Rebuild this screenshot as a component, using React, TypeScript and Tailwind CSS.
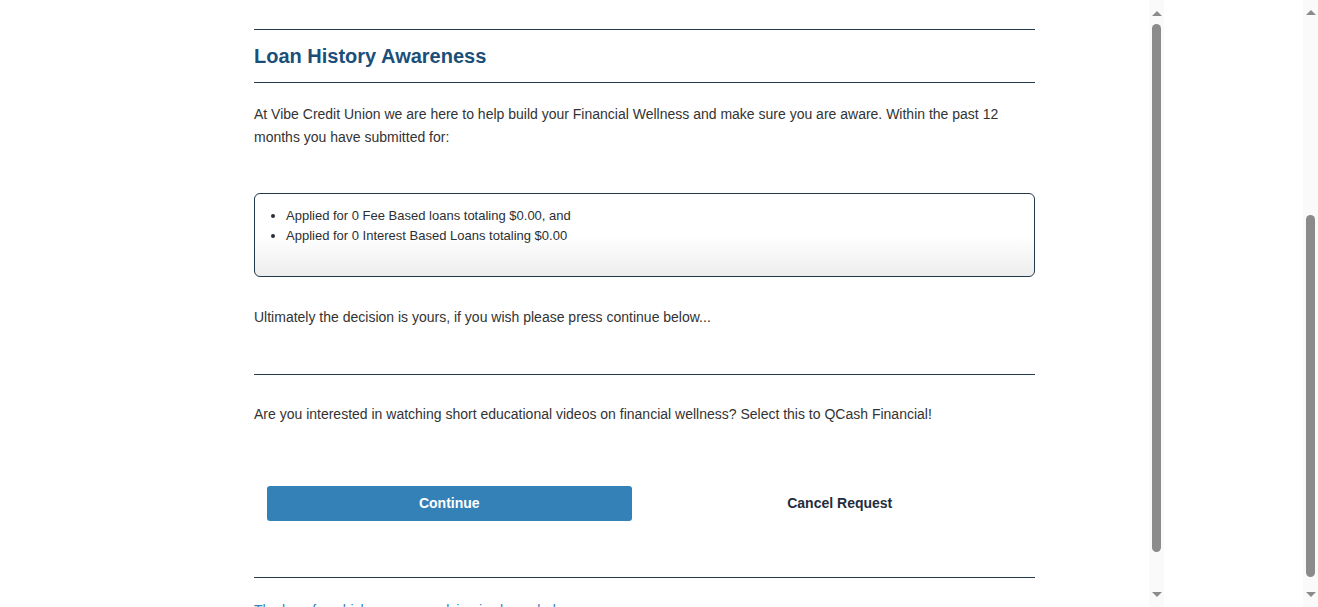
import React from 'react'

const loans = [
  'Applied for 0 Fee Based loans totaling $0.00, and',
  'Applied for 0 Interest Based Loans totaling $0.00',
]

function Scrollbar({ thumbTop, thumbHeight, upTop }: { thumbTop: number; thumbHeight: number; upTop: string }) {
  return (
    <div className="w-[15px] h-full bg-[#fafafa] flex flex-col items-center shrink-0">
      <div className={`${upTop} w-0 h-0 border-l-[5px] border-r-[5px] border-b-[5px] border-l-transparent border-r-transparent border-b-[#8b8b8b]`} />
      <div
        className="w-[9px] rounded-full bg-[#8b8b8b]"
        style={{ marginTop: thumbTop, height: thumbHeight }}
      />
      <div className="flex-1" />
      <div className="mb-[10px] w-0 h-0 border-l-[5px] border-r-[5px] border-t-[5px] border-l-transparent border-r-transparent border-t-[#8b8b8b]" />
    </div>
  )
}

export default function App() {
  return (
    <div className="w-[1318px] h-[607px] overflow-hidden flex bg-white font-['Liberation_Sans',Arial,sans-serif]">
      {/* main panel */}
      <div className="w-[1149px] h-full overflow-hidden shrink-0">
        <div className="ml-[254px] w-[781px] pt-[29px] text-[14px] leading-[23px] text-[#333333]">
          <hr className="border-0 h-px bg-[#22384c]" />
          <h2 className="my-[14px] text-[20px] leading-6 font-bold text-[#1b4f7a]">Loan History Awareness</h2>
          <hr className="border-0 h-px bg-[#22384c]" />

          <p className="mt-[20px]">
            At Vibe Credit Union we are here to help build your Financial Wellness and make sure you are aware. Within the past 12 months you have submitted for:
          </p>

          <div className="mt-[44px] border border-[#22384c] rounded-[6px] bg-gradient-to-b from-white from-50% to-[#ededed] pt-[12px] pb-[30px] pl-[31px]">
            <ul className="list-disc text-[13px] leading-5 text-[#2b2f33]">
              {loans.map((l) => (
                <li key={l}>{l}</li>
              ))}
            </ul>
          </div>

          <p className="mt-[29px]">Ultimately the decision is yours, if you wish please press continue below...</p>

          <hr className="mt-[45px] border-0 h-px bg-[#22384c]" />

          <p className="mt-[28px]">
            Are you interested in watching short educational videos on financial wellness? Select this to QCash Financial!
          </p>

          <div className="mt-[60px] grid grid-cols-2">
            <div className="px-[13px]">
              <button
                type="button"
                className="w-full h-[35px] rounded-[3px] bg-[#3481b8] text-white font-bold text-[14px]"
              >
                Continue
              </button>
            </div>
            <div className="flex items-center justify-center">
              <button type="button" className="font-bold text-[14px] text-[#1f2d3d]">
                Cancel Request
              </button>
            </div>
          </div>

          <hr className="mt-[56px] border-0 h-px bg-[#22384c]" />

          <p className="mt-[21px] text-[#3481b8]">The loan for which you are applying is shown below.</p>
        </div>
      </div>

      <Scrollbar upTop="mt-[11px]" thumbTop={8} thumbHeight={528} />

      <div className="flex-1" />

      <Scrollbar upTop="mt-[10px]" thumbTop={200} thumbHeight={362} />
    </div>
  )
}
